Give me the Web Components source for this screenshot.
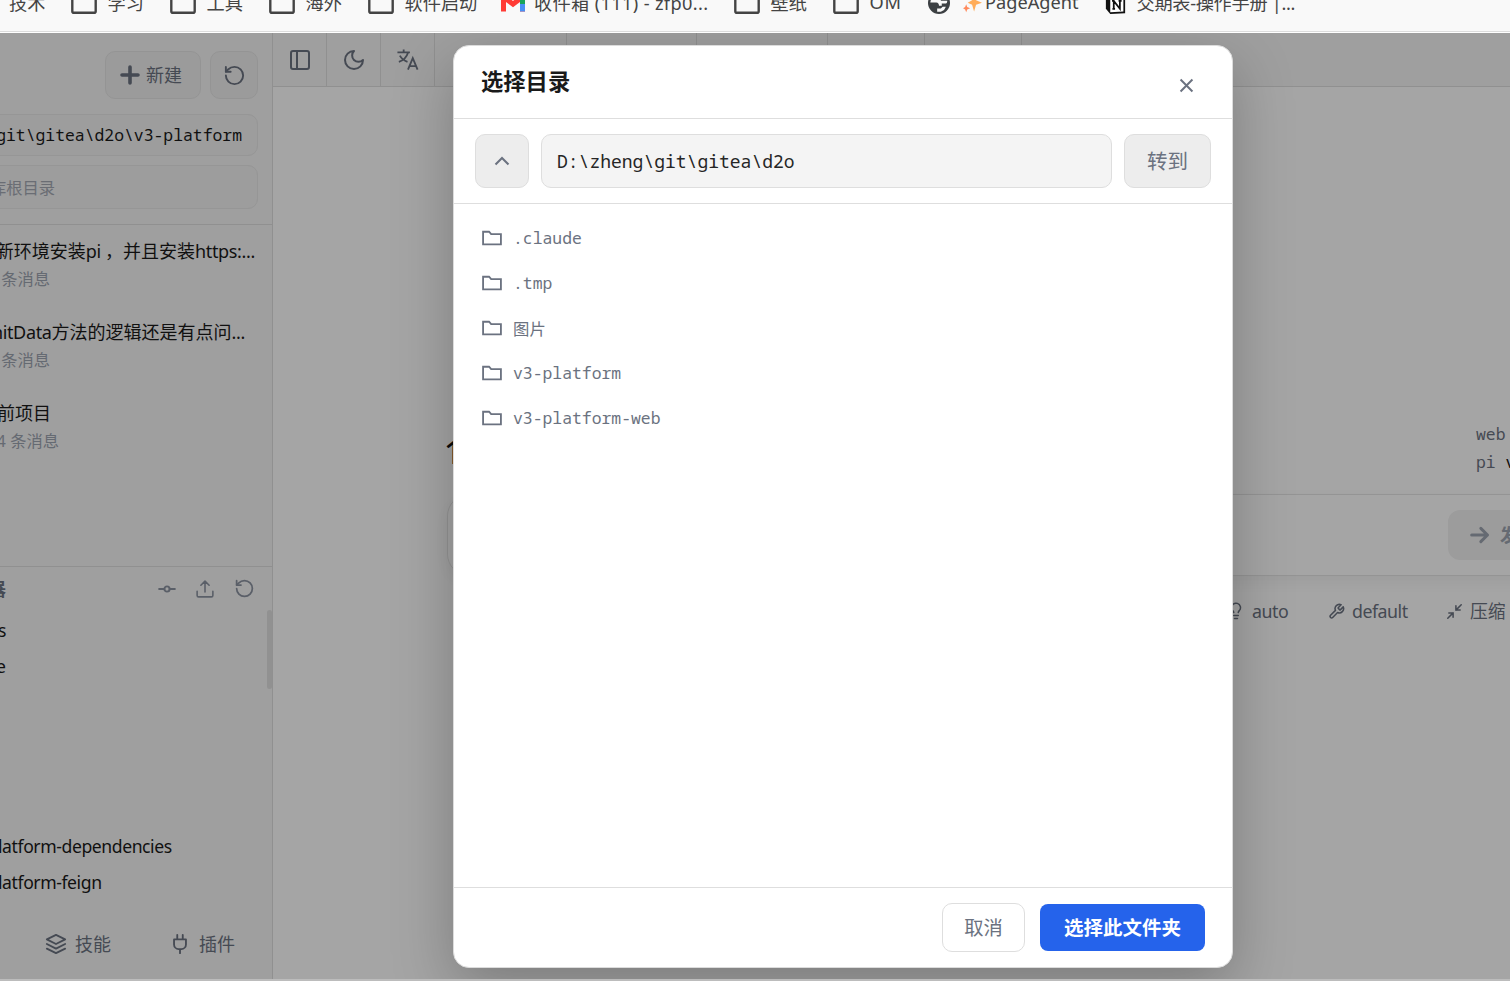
<!DOCTYPE html>
<html lang="zh-CN">
<head>
<meta charset="utf-8">
<title>选择目录</title>
<style>
  html, body {
    margin: 0;
    padding: 0;
    height: 100%;
    overflow: hidden;
    background: #bcbcbc;
  }
  body {
    --mono: "Noto Sans Mono", "DejaVu Sans Mono", "Noto Sans CJK SC", monospace;
    font-family: "Noto Sans", "Noto Sans CJK SC", sans-serif;
    font-size: 18px;
    color: #1a1a1a;
  }
</style>
</head>
<body>
<app-shell></app-shell>

<script>
const line = (d, w = 2) => `<g fill="none" stroke="currentColor" stroke-width="${w}" stroke-linecap="round" stroke-linejoin="round">${d}</g>`;

const ICONS = {
  bookmark: '<rect x="1.2" y="3" width="21.6" height="18" rx="1.5" fill="none" stroke="currentColor" stroke-width="2.2"/>',
  gmail: '<path d="M0 5v15.500h5V11l7 5.300 7-5.300v9.500h5V5l-3-2-9 7-9-7z" fill="#ff3b35"/><path d="M19 11l5-4v4h-5z" fill="#fbbc04"/><path d="M19 8l5-3v9h-5z" fill="#19a55b"/><path d="M19 13h5v7.500h-5z" fill="#4a90f5"/>',
  globe: '<circle cx="12" cy="12" r="12" fill="#3c4043"/><path d="M2.500 11.500h6.500c2 0 3 1.500 3 3.500h3v-2.500h4.500c1 0 1.500-1.500 1.500-3h-7V6H9l-6 3z" fill="#f9f9f9"/><path d="M10 21.500v-3.500h4l2-2h3.500l-2 3.500-3.500 2z" fill="#f9f9f9"/>',
  sparkle: '<path d="M14 0l2.500 8L24 11l-7.500 2.500L14 22l-2.500-8.500L6 11l5.500-3z" fill="#ffad5a"/><path d="M4 13l1.300 3.500L9 18l-3.700 1.500L4 23l-1.300-3.500L0 18l2.700-1.500z" fill="#ff8a5c"/>',
  notion: '<path d="M1 2l17-1 5 4v18L6 24l-5-6z" fill="#111"/><path d="M6 6l15-1v16L6 22z" fill="#fff"/><path d="M10 18V9l7 9V9M8 9h3M15.500 9H19M8.500 18h3" fill="none" stroke="#111" stroke-width="2"/>',
  plus: line('<path d="M12 4v16M4 12h16"/>', 3.6),
  rotate: line('<path d="M3 12a9 9 0 1 0 9-9 9.750 9.750 0 0 0-6.740 2.740L3 8"/><path d="M3 3v5h5"/>'),
  panel: line('<rect x="3" y="3" width="18" height="18" rx="2"/><path d="M9 3v18"/>'),
  moon: line('<path d="M12 3a6 6 0 0 0 9 9 9 9 0 1 1-9-9Z"/>'),
  translate: line('<path d="M1.500 4.500h13M8 1.500v3M4 8c2 3.500 5 5.500 8 6.500M12.500 5c-1.500 5-5 8-9.500 9.500M12.500 22.500l5-12 5 12M14.200 19h6.600"/>', 1.9).replace(/round/g, 'butt'),
  commit: line('<circle cx="12" cy="12" r="3.500"/><path d="M1.500 12h7M15.500 12h7"/>', 2.6),
  upload: line('<path d="M1.500 15v5.500a2 2 0 0 0 2 2h17a2 2 0 0 0 2-2V15M12 16V2M6.500 7L12 1.500 17.500 7"/>', 2.1),
  layers: line('<path d="M12 2L2 7l10 5 10-5-10-5z"/><path d="M2 12l10 5 10-5"/><path d="M2 17l10 5 10-5"/>'),
  plug: line('<path d="M12 22v-4M9 7V2M15 7V2M5.500 7h13v5.500a5 5 0 0 1-5 5h-3a5 5 0 0 1-5-5z"/>'),
  arrow: line('<path d="M2 12h19M13 4l8 8-8 8"/>', 3.6),
  bulb: line('<path d="M15 14c.2-1 .7-1.700 1.500-2.500A6 6 0 1 0 6 8c0 1.300.5 2.600 1.500 3.500.8.800 1.300 1.500 1.500 2.500M9 18h6M10 22h4"/>'),
  wrench: line('<path d="M14.700 6.300a1 1 0 0 0 0 1.400l1.600 1.600a1 1 0 0 0 1.400 0l3.770-3.770a6 6 0 0 1-7.940 7.940l-6.910 6.910a2.120 2.120 0 0 1-3-3l6.910-6.910a6 6 0 0 1 7.940-7.940z"/>', 2.2),
  compress: line('<path d="M21.500 2.500L14 10M14 4v6h6M2.500 21.500L10 14M4 14h6v6"/>', 2.2),
  chevron: line('<path d="M5.500 15.500l6.500-6.500 6.500 6.500"/>', 2.1).replace(/round/g, 'butt'),
  close: line('<path d="M4.500 4.500l15 15M19.500 4.500l-15 15"/>', 2.5).replace(/round/g, 'butt'),
  folder: '<path d="M1.300 4.500h7.200l2.500 2.800h11.700v12.400H1.300z" fill="none" stroke="currentColor" stroke-width="2.200"/>'
};

class UiIcon extends HTMLElement {
  constructor() {
    super();
    this.attachShadow({mode: 'open'});
  }

  connectedCallback() {
    const size = this.getAttribute('size') || 24;
    this.shadowRoot.innerHTML = `
      <style>
        :host { display: block; flex: none; width: ${size}px; height: ${size}px; }
        svg { display: block; width: 100%; height: 100%; }
      </style>
      <svg viewBox="0 0 24 24">${ICONS[this.getAttribute('name')]}</svg>
    `;
  }
}
customElements.define('ui-icon', UiIcon);

// registers an element whose shadow root holds fixed markup
function define(name, html) {
  const template = document.createElement('template');
  template.innerHTML = html;
  customElements.define(name, class extends HTMLElement {
    constructor() {
      super();
      this.attachShadow({mode: 'open'}).appendChild(template.content.cloneNode(true));
    }
  });
}

define('bookmark-item', `
  <style>
    :host { display: flex; align-items: center; flex: none; box-sizing: border-box; gap: 10.500px; white-space: nowrap; }
    span { padding-bottom: 3px; }
  </style>
  <slot name="icon"></slot><span><slot></slot></span>
`);

define('bookmarks-bar', `
  <style>
    :host {
      display: block;
      flex: none;
      box-sizing: border-box;
      height: 33px;
      overflow: hidden;
      background: #f9f9f9;
      border-bottom: 1px solid #fff;
      box-shadow: inset 0 -1px #dcdcdc;
      color: #444;
    }
    nav { display: flex; height: 40px; margin-top: -17px; padding-left: 9px; font-size: 18.200px; }
  </style>
  <nav>
    <bookmark-item style="width:62px">技术</bookmark-item>
    <bookmark-item style="width:99px"><ui-icon slot="icon" name="bookmark" size="26"></ui-icon>学习</bookmark-item>
    <bookmark-item style="width:99px"><ui-icon slot="icon" name="bookmark" size="26"></ui-icon>工具</bookmark-item>
    <bookmark-item style="width:99px"><ui-icon slot="icon" name="bookmark" size="26"></ui-icon>海外</bookmark-item>
    <bookmark-item style="width:133px"><ui-icon slot="icon" name="bookmark" size="26"></ui-icon>软件启动</bookmark-item>
    <bookmark-item style="width:233px;gap:9px;letter-spacing:0.35px"><ui-icon slot="icon" name="gmail" size="24"></ui-icon>收件箱 (111) - zfp0...</bookmark-item>
    <bookmark-item style="width:99px"><ui-icon slot="icon" name="bookmark" size="26"></ui-icon>壁纸</bookmark-item>
    <bookmark-item style="width:95px;letter-spacing:0.9px"><ui-icon slot="icon" name="bookmark" size="26"></ui-icon>OM</bookmark-item>
    <bookmark-item style="width:35px"><ui-icon slot="icon" name="globe" size="22"></ui-icon></bookmark-item>
    <bookmark-item style="width:142px;gap:3px"><ui-icon slot="icon" name="sparkle" size="19"></ui-icon>PageAgent</bookmark-item>
    <bookmark-item style="letter-spacing:-0.3px"><ui-icon slot="icon" name="notion" size="21"></ui-icon>交期表-操作手册 |...</bookmark-item>
  </nav>
`);

define('soft-button', `
  <style>
    :host {
      display: flex;
      align-items: center;
      justify-content: center;
      flex: none;
      box-sizing: border-box;
      gap: 7px;
      height: 48px;
      background: #efefef;
      border: 1px solid #e4e4e4;
      border-radius: 10px;
      color: #6b7280;
      white-space: nowrap;
    }
    ::slotted(span) { padding-bottom: 2px; }
  </style>
  <slot></slot>
`);

define('session-item', `
  <style>
    :host { display: flex; flex-direction: column; height: 81px; white-space: nowrap; }
    .title, .meta { display: flex; justify-content: flex-end; }
    .title { line-height: 30px; white-space: pre; }
    .meta { line-height: 27px; font-size: 16.300px; color: #9ca3af; }
    ::slotted(i) { font-style: normal; letter-spacing: -0.35px; }
  </style>
  <div class="title"><slot></slot></div>
  <div class="meta"><slot name="meta"></slot></div>
`);

define('side-bar', `
  <style>
    :host {
      display: flex;
      flex-direction: column;
      flex: none;
      box-sizing: border-box;
      width: 273px;
      overflow: hidden;
      background: #f4f4f4;
      border-right: 1px solid #dedede;
    }
    .actions { display: flex; justify-content: flex-end; gap: 9px; padding: 18px 14px 15px 0; }
    .field {
      display: flex;
      align-items: center;
      justify-content: flex-end;
      box-sizing: border-box;
      margin: 0 14px 9px -20px;
      padding: 0 15px;
      background: #f1f1f1;
      border: 1px solid #e6e6e6;
      border-radius: 10px;
      white-space: nowrap;
    }
    .path { height: 42px; padding-bottom: 2px; font-family: var(--mono); font-size: 16.400px; }
    .search { height: 44px; margin-bottom: 15px; justify-content: flex-start; padding-left: 9px; font-size: 16.300px; color: #a3a8b2; }
    .sessions { box-sizing: border-box; height: 342px; padding-top: 11px; border-top: 1px solid #dedede; }
    .files { display: flex; align-items: center; justify-content: flex-end; flex: none; box-sizing: border-box; height: 44px; border-top: 1px solid #dedede; padding-right: 17px; gap: 20px; color: #8b92a0; }
    .files b { margin-right: auto; margin-left: -12px; padding-bottom: 2px; font-size: 18px; color: #6b7280; }
    .tree { display: grid; grid-template-columns: 1fr 5px; height: 295px; overflow: hidden; }
    .rows { line-height: 36px; padding-top: 2px; white-space: nowrap; font-size: 17.600px; letter-spacing: -0.42px; }
    .rows div { height: 36px; }
    .thumb { height: 79px; border-radius: 3px; background: #dfdfdf; }
    .tabs { display: flex; padding: 19px 0 0 45px; line-height: 40px; color: #6b7280; }
    .tabs span { display: flex; align-items: center; }
  </style>
  <div class="actions">
    <soft-button style="width:96px"><ui-icon name="plus" size="24" style="margin-left:-6px;margin-right:-3px"></ui-icon><span>新建</span></soft-button>
    <soft-button style="width:48px"><ui-icon name="rotate" size="23"></ui-icon></soft-button>
  </div>
  <div class="field path">git\\gitea\\d2o\\v3-platform</div>
  <div class="field search">库根目录</div>
  <div class="sessions">
    <session-item style="margin-right:17px">新环境安装<i>pi </i>，并且安装<i>https:...</i><span slot="meta" style="margin-right:205px">条消息</span></session-item>
    <session-item style="margin-right:27px"><i>nitData</i>方法的逻辑还是有点问<i>...</i><span slot="meta" style="margin-right:195px">条消息</span></session-item>
    <session-item style="margin-right:221px">前项目<span slot="meta" style="margin-right:-8px">4 条消息</span></session-item>
  </div>
  <div class="files">
    <b>器</b>
    <ui-icon name="commit" size="18"></ui-icon>
    <ui-icon name="upload" size="18"></ui-icon>
    <ui-icon name="rotate" size="21"></ui-icon>
  </div>
  <div class="tree">
    <div class="rows">
      <div style="margin-left:-2px">s</div>
      <div style="margin-left:-4px">e</div>
      <div></div><div></div><div></div><div></div>
      <div style="margin-left:-2px">latform-dependencies</div>
      <div style="margin-left:-2px">latform-feign</div>
    </div>
    <div class="thumb"></div>
  </div>
  <div class="tabs">
    <span style="width:124px;gap:8px"><ui-icon name="layers" size="22"></ui-icon>技能</span>
    <span style="gap:8px"><ui-icon name="plug" size="22"></ui-icon>插件</span>
  </div>
`);

define('top-bar', `
  <style>
    :host { display: flex; flex: none; box-sizing: border-box; height: 54px; background: #f4f4f4; border-bottom: 1px solid #dedede; color: #6b7280; }
    div { display: flex; align-items: center; justify-content: center; flex: none; box-sizing: border-box; width: 54px; border-right: 1px solid #dedede; }
  </style>
  <div><ui-icon name="panel"></ui-icon></div>
  <div><ui-icon name="moon"></ui-icon></div>
  <div><ui-icon name="translate" size="23"></ui-icon></div>
  <div style="width:132px"></div>
  <div style="width:130px"></div>
  <div style="width:131px"></div>
  <div style="width:97px"></div>
  <div style="width:97px"></div>
`);

define('main-panel', `
  <style>
    :host { display: flex; flex-direction: column; flex: 1; min-width: 0; overflow: hidden; background: #fefefe; white-space: nowrap; }
    .status { display: flex; align-items: center; justify-content: space-between; box-sizing: border-box; height: 407px; padding: 333px 0 18px 171px; }
    .count { font-size: 32px; font-weight: 500; line-height: 56px; padding-top: 8px; color: #111; }
    .versions { width: 34px; font-family: var(--mono); font-size: 16.400px; line-height: 28px; color: #6b7280; }
    .versions b { font-weight: 400; color: #111; }
    .composer {
      display: flex;
      align-items: center;
      box-sizing: border-box;
      flex: none;
      width: 1180px;
      height: 82px;
      margin-left: 174px;
      padding-left: 1000px;
      border: 1px solid #e4e4e4;
      border-radius: 22px;
      box-shadow: 0 6px 18px rgba(0, 0, 0, 0.06);
    }
    .send { display: flex; align-items: center; gap: 10px; box-sizing: border-box; width: 130px; height: 50px; padding-left: 22px; border-radius: 12px; background: #f0f0f0; color: #9ca3af; font-weight: 700; }
    .send span { padding-bottom: 3px; }
    .tools { display: flex; margin-left: 954px; line-height: 36px; padding-top: 17px; color: #6b7280; font-size: 17.800px; }
    .tools span { display: flex; align-items: center; flex: none; gap: 7px; letter-spacing: -0.5px; }
  </style>
  <top-bar></top-bar>
  <div class="status">
    <div class="count">1</div>
    <div class="versions">web<br>pi <b>v</b></div>
  </div>
  <div class="composer">
    <div class="send"><ui-icon name="arrow" size="20"></ui-icon><span>发</span></div>
  </div>
  <div class="tools">
    <span style="width:101px"><ui-icon name="bulb" size="18"></ui-icon>auto</span>
    <span style="width:118px"><ui-icon name="wrench" size="17"></ui-icon>default</span>
    <span style="letter-spacing:0"><ui-icon name="compress" size="17"></ui-icon>压缩</span>
  </div>
`);

define('folder-row', `
  <style>
    :host { display: flex; align-items: center; height: 45px; gap: 11px; font-family: var(--mono); font-size: 16.400px; color: #6b7280; }
    ui-icon { margin-left: 1px; }
  </style>
  <ui-icon name="folder" size="20"></ui-icon><span><slot></slot></span>
`);

define('directory-dialog', `
  <style>
    :host {
      display: flex;
      flex-direction: column;
      flex: none;
      box-sizing: border-box;
      width: 780px;
      height: 923px;
      background: #fff;
      border: 1px solid #dcdcdc;
      border-radius: 16px;
      box-shadow: 0 20px 60px rgba(0, 0, 0, 0.25);
    }
    header { display: flex; align-items: center; justify-content: space-between; box-sizing: border-box; height: 73px; padding: 0 37px 0 27px; border-bottom: 1px solid #dedede; }
    h2 { margin: 0; font-size: 22.300px; line-height: 30px; }
    header ui-icon { margin-top: 7px; margin-right: -1px; color: #6b7280; }
    .bar { display: flex; gap: 12px; height: 54px; padding: 15px 21px; border-bottom: 1px solid #dedede; }
    .bar soft-button { height: 54px; background: #ededed; border-color: #dedede; }
    .path { flex: 1; box-sizing: border-box; padding-left: 15px; line-height: 52px; border: 1px solid #dedede; border-radius: 10px; background: #f4f4f4; font-family: var(--mono); font-size: 18px; color: #262626; }
    .list { flex: 1; padding: 11px 27px; }
    footer { display: flex; align-items: center; justify-content: flex-end; gap: 15px; box-sizing: border-box; height: 80px; padding-right: 27px; border-top: 1px solid #dedede; }
    .cancel { width: 83px; height: 49px; background: #fff; border-color: #dedede; font-size: 19.300px; }
    .confirm { width: 165px; height: 47px; background: #2563eb; border: 0; border-radius: 8px; color: #fff; font-size: 19.500px; font-weight: 700; }
  </style>
  <header>
    <h2>选择目录</h2>
    <ui-icon name="close" size="19"></ui-icon>
  </header>
  <div class="bar">
    <soft-button style="width:54px"><ui-icon name="chevron" size="24"></ui-icon></soft-button>
    <div class="path">D:\\zheng\\git\\gitea\\d2o</div>
    <soft-button style="width:87px;font-size:20.500px"><span>转到</span></soft-button>
  </div>
  <div class="list"><slot></slot></div>
  <footer>
    <soft-button class="cancel"><span>取消</span></soft-button>
    <soft-button class="confirm"><span>选择此文件夹</span></soft-button>
  </footer>
`);

define('app-shell', `
  <style>
    :host { display: flex; flex-direction: column; height: 981px; overflow: hidden; }
    .app { position: relative; display: flex; height: 946px; overflow: hidden; }
    .overlay { position: absolute; inset: 0; display: flex; align-items: flex-start; padding: 12px 0 0 453px; background: rgba(0, 0, 0, 0.35); }
  </style>
  <bookmarks-bar></bookmarks-bar>
  <div class="app">
    <side-bar></side-bar>
    <main-panel></main-panel>
    <div class="overlay">
      <directory-dialog>
        <folder-row>.claude</folder-row>
        <folder-row>.tmp</folder-row>
        <folder-row>图片</folder-row>
        <folder-row>v3-platform</folder-row>
        <folder-row>v3-platform-web</folder-row>
      </directory-dialog>
    </div>
  </div>
`);
</script>
</body>
</html>
